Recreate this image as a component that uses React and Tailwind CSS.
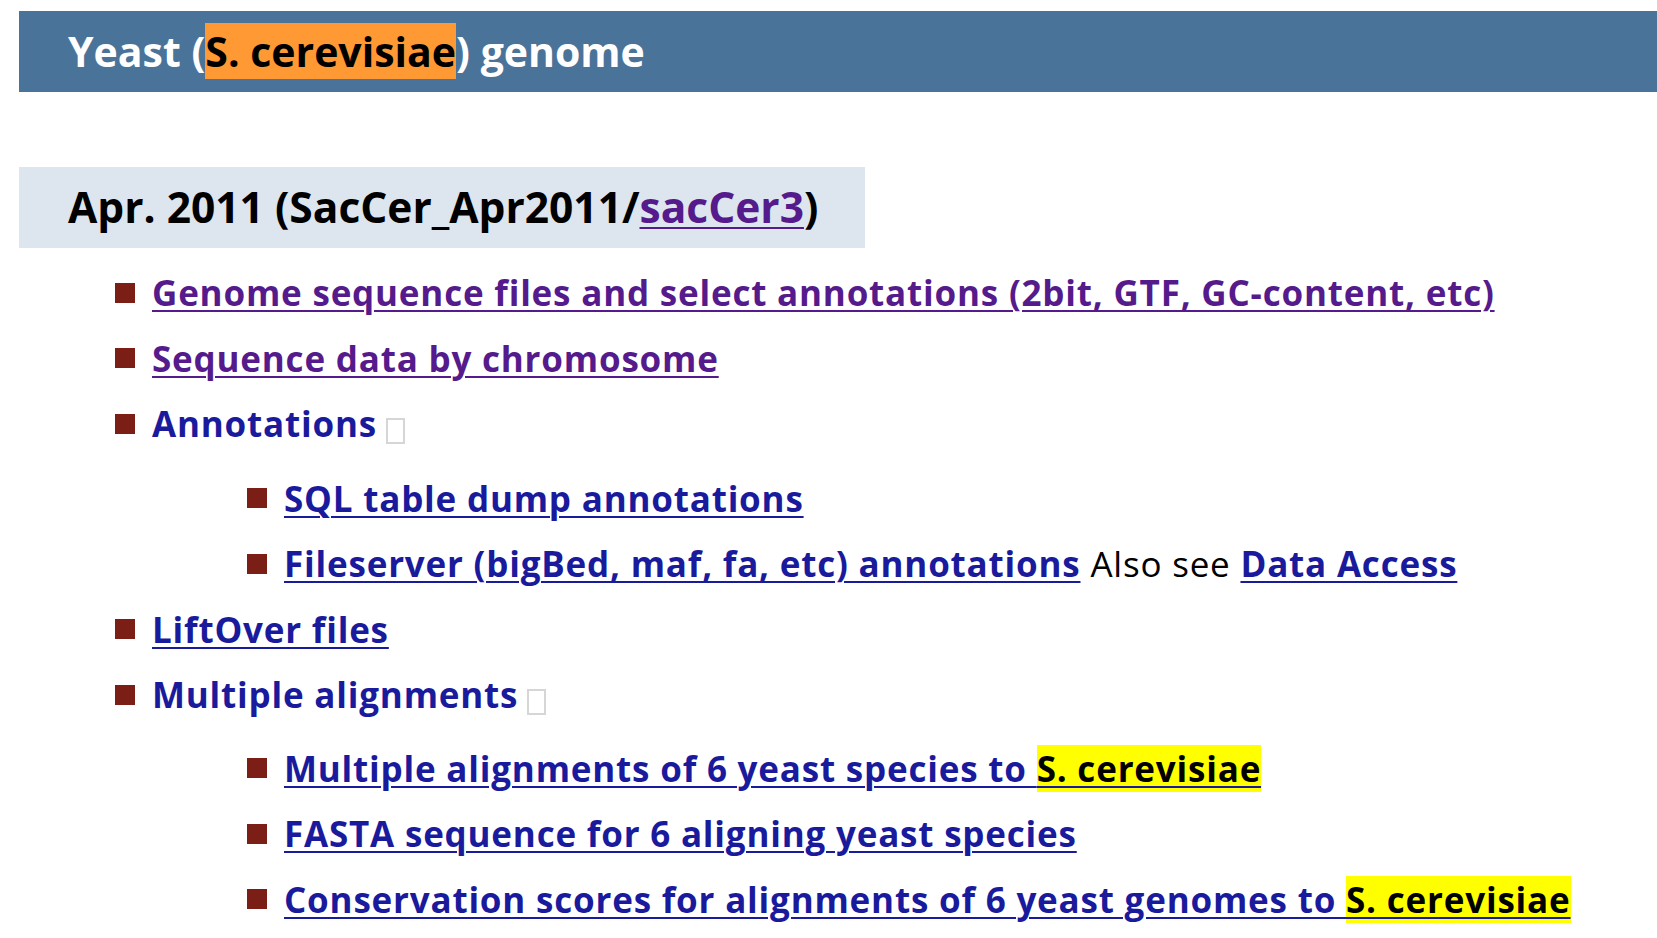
import React from 'react';

const BLUE = 'text-[#1a1a9c]';
const PURPLE = 'text-[#551a8b]';

function Bullet() {
  return <span className="inline-block w-[20px] h-[20px] bg-[#7b1f16] shrink-0 mr-[17px]" />;
}

function Tofu() {
  return <span className="inline-block w-[19px] h-[26px] border-2 border-[#d6d6d6] ml-[9px] translate-y-[7px]" />;
}

function Hl({ children }) {
  return <span className="bg-[#ffff00] text-black">{children}</span>;
}

function Item({ children, nested }) {
  return (
    <li className={`flex items-center h-[65.5px] ${nested ? 'pl-[247px]' : 'pl-[115px]'}`}>
      <Bullet />
      <div className="whitespace-nowrap">{children}</div>
    </li>
  );
}

function A({ children, visited }) {
  return (
    <a href="#" className={`${visited ? PURPLE : BLUE} font-bold underline decoration-2 underline-offset-[4px]`}>
      {children}
    </a>
  );
}

export default function App() {
  return (
    <div className="min-h-screen bg-white pt-[11px] font-['Segoe_UI','Open_Sans',sans-serif]">
      {/* title bar */}
      <div className="ml-[19px] h-[81px] bg-[#4a7399] flex items-center pl-[49px]">
        <h1 className="text-[41px] font-bold text-white leading-none">
          Yeast (<span className="bg-[#ff9933] text-black">S. cerevisiae</span>) genome
        </h1>
      </div>

      {/* assembly */}
      <div className="ml-[19px] mt-[75px] w-[846px] h-[81px] bg-[#dde5ee] flex items-center pl-[49px]">
        <h2 className="text-[42.5px] font-bold text-black leading-none">
          Apr. 2011 (SacCer_Apr2011/<a href="#" className={`${PURPLE} underline decoration-2 underline-offset-[4px]`}>sacCer3</a>)
        </h2>
      </div>

      <ul className="mt-[12px] text-[35px] tracking-[0.8px] leading-none">
        <Item><A visited>Genome sequence files and select annotations (2bit, GTF, GC-content, etc)</A></Item>
        <Item><A visited>Sequence data by chromosome</A></Item>
        <Item>
          <span className={`${BLUE} font-bold`}>Annotations</span><Tofu />
        </Item>
        <li className="mt-[9px]">
          <ul>
            <Item nested><A>SQL table dump annotations</A></Item>
            <Item nested>
              <A>Fileserver (bigBed, maf, fa, etc) annotations</A>
              <span className="text-black"> Also see </span>
              <A>Data Access</A>
            </Item>
          </ul>
        </li>
        <Item><A>LiftOver files</A></Item>
        <Item>
          <span className={`${BLUE} font-bold`}>Multiple alignments</span><Tofu />
        </Item>
        <li className="mt-[8px]">
          <ul>
            <Item nested><A>Multiple alignments of 6 yeast species to <Hl>S. cerevisiae</Hl></A></Item>
            <Item nested><A>FASTA sequence for 6 aligning yeast species</A></Item>
            <Item nested><A>Conservation scores for alignments of 6 yeast genomes to <Hl>S. cerevisiae</Hl></A></Item>
          </ul>
        </li>
      </ul>
    </div>
  );
}
